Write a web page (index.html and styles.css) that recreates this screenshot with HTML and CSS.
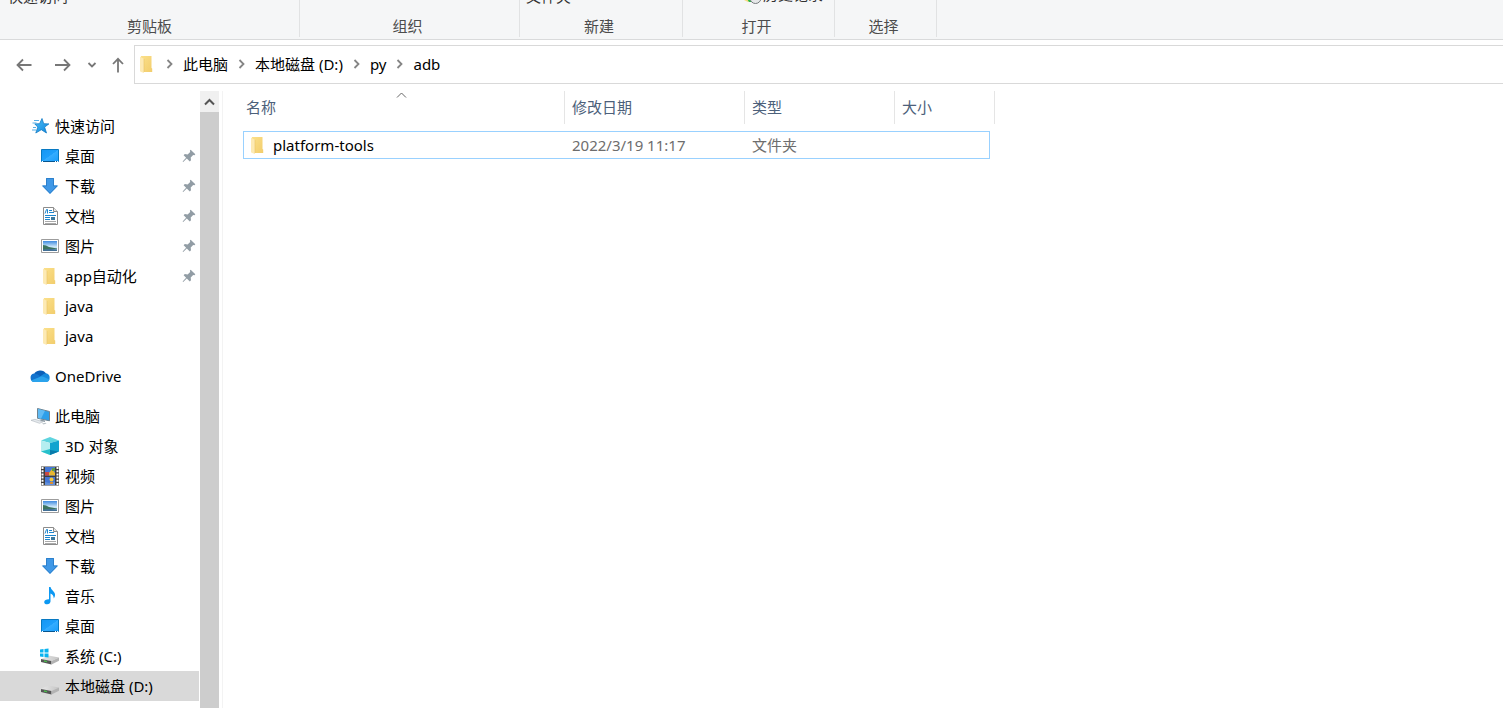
FILE: index.html
```html
<!DOCTYPE html>
<html lang="zh-CN">
<head>
<meta charset="utf-8">
<title>adb</title>
<link rel="stylesheet" href="styles.css">
</head>
<body>
<svg class="sprite" aria-hidden="true">
  <defs>
    <linearGradient id="g-folder" x1="0" y1="0" x2="1" y2="1"><stop offset="0" stop-color="#fbe08a"/><stop offset="1" stop-color="#f2cd6c"/></linearGradient>
    <linearGradient id="g-star" x1="0" y1="0" x2="1" y2="1"><stop offset="0" stop-color="#4fc0f7"/><stop offset="1" stop-color="#0c84dc"/></linearGradient>
    <linearGradient id="g-desk" x1="0" y1="0" x2="1" y2="1"><stop offset="0" stop-color="#1496f2"/><stop offset="0.5" stop-color="#1e9ffb"/><stop offset="0.52" stop-color="#35adff"/><stop offset="1" stop-color="#189cfb"/></linearGradient>
    <linearGradient id="g-sky" x1="0" y1="0" x2="0" y2="1"><stop offset="0" stop-color="#3f8be0"/><stop offset="0.6" stop-color="#d4ecfa"/><stop offset="1" stop-color="#6fa8cf"/></linearGradient>
    <linearGradient id="g-drive" x1="0" y1="0" x2="1" y2="0"><stop offset="0" stop-color="#e9e9e9"/><stop offset="1" stop-color="#c4c4c4"/></linearGradient>
  </defs>
  <symbol id="folder" viewBox="0 0 20 20">
    <path d="M4 2h10.500v12l.7.600V18H4z" fill="url(#g-folder)"/>
    <path d="M3 2.500l4 2.500v14l-3.500-1.200L3 17z" fill="#fdeab4"/>
    <path d="M7 5v13" stroke="#e9c265" stroke-width=".6"/>
  </symbol>
  <symbol id="star" viewBox="0 0 20 20">
    <path d="M12 2.500l1.700 5.200 5.200.2-4.300 3.200 1.900 5.900-5.200-3.300-5.500 3.300 2-5.900-3-3.200 4.800-.2z" fill="url(#g-star)" stroke="#147bc4" stroke-width=".8"/>
    <path d="M4 4.500h5M2.500 7h4M2 14h4M3 11.500h3" stroke="#56aee6" stroke-width="1"/>
  </symbol>
  <symbol id="desktop" viewBox="0 0 20 20">
    <path d="M1.500 3.500h17v12h-17z" fill="url(#g-desk)" stroke="#0879c2"/>
    <path d="M2 15.500h16" stroke="#05558f"/><path d="M2 15.500h1M15 15.500h1M17 15.500h1" stroke="#fff"/>
  </symbol>
  <symbol id="download" viewBox="0 0 20 20">
    <path d="M6 2h8v7.500h4.300L10 18 1.700 9.500H6z" fill="#3f98e7"/><path d="M6.500 2.500h7V10h3.600L10 17.300 2.900 10h3.600z" fill="none" stroke="#2d80cb"/>
  </symbol>
  <symbol id="document" viewBox="0 0 20 20">
    <path d="M3.500 1.500h10l4 4v13h-14z" fill="#fff" stroke="#8c8c8c"/>
    <path d="M13.500 1.500v4h4" fill="#e6e6e6" stroke="#8c8c8c"/>
    <path d="M5 7.500l1.500-4h1v4M9 4.500h3M9 6.500h5M5 9.500h11M5 11.500h5M5 13.500h5" fill="none" stroke="#1c86cf"/>
    <path d="M11 11h4v3h-4z" fill="#3d789c"/><path d="M5 15.500h11M5 17.500h11" stroke="#aaa"/>
  </symbol>
  <symbol id="picture" viewBox="0 0 20 20">
    <path d="M1.500 3.500h17v13h-17z" fill="#fff" stroke="#9c9c9c"/>
    <path d="M3 5h14v10H3z" fill="url(#g-sky)"/><path d="M3 9q3 0 6 2l8 1.500v.5L3 14z" fill="#3c7460"/><path d="M3 13.500q7-1 14 0V15H3z" fill="#416f96"/>
  </symbol>
  <symbol id="onedrive" viewBox="0 0 20 20">
    <path d="M4 8.500A6.500 5.500 0 0 1 16 7.500l-1 5.500H6z" fill="#0a5fb8"/>
    <path d="M4.500 16A4.300 4.300 0 0 1 4 7.500q3.500 0 6 2.500l3 6z" fill="#1173ce"/>
    <path d="M10 10.500l4-2.700q1.500-.8 3-.2A4.500 4.500 0 0 1 16.500 16H9z" fill="#1689dc"/>
    <path d="M1 14.500l10-4q2-.5 4 1l4.500 2a3.500 3.500 0 0 1-3 2.500H4.500q-2.500 0-3.500-1.500z" fill="#2ba3ec"/>
  </symbol>
  <symbol id="computer" viewBox="0 0 20 20">
    <path d="M7.500 2.500l12 3v9.300l-12-2.500z" fill="#2d9fea" stroke="#70838f"/><path d="M8 3l7 1.800-4 8L8 12z" fill="#61bbf4"/>
    <path d="M11 13.500l4 1v1.500l-5-1z" fill="#8d9aa3"/><path d="M1 14.300l4-1 8 2.500-3.500 1.500z" fill="#e5e9ed" stroke="#aeb7bd" stroke-width=".6"/><path d="M12 17.500l3.500-.8 1 .8-3 1z" fill="#bac2c8"/>
  </symbol>
  <symbol id="cube" viewBox="0 0 20 20">
    <path d="M10 1l9 3.500L10 7 1 4.500z" fill="#5ed4df"/><path d="M1 4.500L10 7v12l-9-3.500z" fill="#b5eef0"/><path d="M19 4.500L10 7v12l9-3.500z" fill="#12a4cf"/>
    <path d="M10 14l9 1.500L10 19z" fill="#087bab"/><path d="M1 15.500l9-2.500v6z" fill="#27c0cb"/>
  </symbol>
  <symbol id="video" viewBox="0 0 20 20">
    <path d="M1 0.500h18v19H1z" fill="#3e3e3e"/><path d="M2.500 1v18M17.500 1v18" stroke="#fff" stroke-width="2" stroke-dasharray="2 1.200"/>
    <path d="M5 1h10v8.500H5zM5 11h10v8H5z" fill="#4377d5"/>
    <path d="M9 7l3-4 3 4v2.500H9z" fill="#e8b72e"/><path d="M5 6h4v3.500H5z" fill="#ca4942"/><path d="M12 2h3v3h-3z" fill="#5c9a43"/><circle cx="11.500" cy="13.500" r="2" fill="#f2c83b"/><path d="M5 16l4 1 6-1v3H5z" fill="#628fd8"/><path d="M10 16h3v2h-3z" fill="#d98d35"/>
  </symbol>
  <symbol id="music" viewBox="0 0 20 20">
    <path d="M9 1h1.500q.5 2.500 3 4.500 3 3 .3 7-.2-4-3.300-5v8q-.3 2.500-3.300 2.800-3 0-3-2.300.3-2.700 4.800-2.700z" fill="#0c98f2"/>
  </symbol>
  <symbol id="drive" viewBox="0 0 20 20">
    <path d="M1 13l7.500-3.500 10.500 2-7.500 3.500z" fill="url(#g-drive)"/><path d="M1 13l10.500 2V18.500L1 16z" fill="#555"/><path d="M11.500 15l7.500-3.500v3.300l-7.500 3.700z" fill="#b3b3b3"/><path d="M4 15l3 .7" stroke="#4dbb4e" stroke-width="1.300"/>
  </symbol>
  <symbol id="sysdrive" viewBox="0 0 20 20">
    <use href="#drive" width="20" height="20"/><path d="M0 3.500l3.500-.5v3.500H0zM4.500 3L8.500 2.500v4h-4zM0 7.500h3.500V11L0 10.500zM4.500 7.500h4v4l-4-.5z" fill="#08b3f0"/>
  </symbol>
  <symbol id="pin" viewBox="0 0 14 14">
    <path d="M8.700 0.700l4.600 4.500-.8 1-1.300-.2-2.500 2.600.3 2.600-1.200 1.200-3-3L1.200 13 .6 12.600l3.500-3.800-2.500-2.500 1.200-1.200 2.800.3 2.600-2.500-.3-1.300z" fill="#929da5"/>
  </symbol>
  <symbol id="chevron" viewBox="0 0 7 10"><path d="M1.500 1l4 4-4 4" fill="none" stroke="#858585" stroke-width="1.800"/></symbol>
</svg>

<header class="ribbon">
  <section class="group group-clipboard"><div class="command">快速访问</div><h2 class="group-label">剪贴板</h2></section>
  <section class="group group-organize"><h2 class="group-label">组织</h2></section>
  <section class="group group-new"><div class="command">文件夹</div><h2 class="group-label">新建</h2></section>
  <section class="group group-open">
    <div class="command">
      <svg class="icon" viewBox="0 0 20 20" aria-hidden="true"><path d="M1 7h7v9l-3 2-4-2z" fill="#f8da7c"/><path d="M4 15l5-8v11H6z" fill="#2eb84b"/><circle cx="12.500" cy="14" r="5.500" fill="#e6e8e9" stroke="#777b7e"/><path d="M12.500 11v5" fill="none" stroke="#777"/></svg>历史记录
    </div>
    <h2 class="group-label">打开</h2>
  </section>
  <section class="group group-select"><h2 class="group-label">选择</h2></section>
</header>

<nav class="navbar" aria-label="导航">
  <div class="nav-buttons">
    <button class="nav-button" aria-label="后退"><svg width="16" height="14" viewBox="0 0 16 14"><path d="M15.500 7H1.500M7 1.500L1.500 7 7 12.500"/></svg></button>
    <button class="nav-button" aria-label="前进"><svg width="16" height="14" viewBox="0 0 16 14"><path d="M0 7h14.500M9 1.500L14.500 7 9 12.500"/></svg></button>
    <button class="nav-button" aria-label="最近浏览的位置"><svg width="10" height="8" viewBox="0 0 10 8"><path d="M1.500 2L5 5.500 8.500 2"/></svg></button>
    <button class="nav-button" aria-label="上移"><svg width="12" height="16" viewBox="0 0 12 16"><path d="M6 15.500V1.800M1 7l5-5.200L11 7"/></svg></button>
  </div>
  <div class="address">
    <svg width="18" height="20" viewBox="1 0 18 20" aria-hidden="true"><use href="#folder" width="20" height="20"/></svg>
    <svg class="chevron" aria-hidden="true"><use href="#chevron"/></svg>
    <a class="crumb" href="#">此电脑</a>
    <svg class="chevron" aria-hidden="true"><use href="#chevron"/></svg>
    <a class="crumb" href="#">本地磁盘 (D:)</a>
    <svg class="chevron" aria-hidden="true"><use href="#chevron"/></svg>
    <a class="crumb" href="#">py</a>
    <svg class="chevron" aria-hidden="true"><use href="#chevron"/></svg>
    <a class="crumb" href="#">adb</a>
  </div>
</nav>

<div class="workspace">
  <aside class="sidebar">
    <div class="tree">
      <div class="branch">
        <a class="node root" href="#"><svg class="icon"><use href="#star"/></svg>快速访问</a>
        <a class="node" href="#"><svg class="icon"><use href="#desktop"/></svg>桌面<svg class="pin"><use href="#pin"/></svg></a>
        <a class="node" href="#"><svg class="icon"><use href="#download"/></svg>下载<svg class="pin"><use href="#pin"/></svg></a>
        <a class="node" href="#"><svg class="icon"><use href="#document"/></svg>文档<svg class="pin"><use href="#pin"/></svg></a>
        <a class="node" href="#"><svg class="icon"><use href="#picture"/></svg>图片<svg class="pin"><use href="#pin"/></svg></a>
        <a class="node" href="#"><svg class="icon"><use href="#folder"/></svg>app自动化<svg class="pin"><use href="#pin"/></svg></a>
        <a class="node" href="#"><svg class="icon"><use href="#folder"/></svg>java</a>
        <a class="node" href="#"><svg class="icon"><use href="#folder"/></svg>java</a>
      </div>
      <div class="branch">
        <a class="node root" href="#"><svg class="icon"><use href="#onedrive"/></svg>OneDrive</a>
      </div>
      <div class="branch">
        <a class="node root" href="#"><svg class="icon"><use href="#computer"/></svg>此电脑</a>
        <a class="node" href="#"><svg class="icon"><use href="#cube"/></svg>3D 对象</a>
        <a class="node" href="#"><svg class="icon"><use href="#video"/></svg>视频</a>
        <a class="node" href="#"><svg class="icon"><use href="#picture"/></svg>图片</a>
        <a class="node" href="#"><svg class="icon"><use href="#document"/></svg>文档</a>
        <a class="node" href="#"><svg class="icon"><use href="#download"/></svg>下载</a>
        <a class="node" href="#"><svg class="icon"><use href="#music"/></svg>音乐</a>
        <a class="node" href="#"><svg class="icon"><use href="#desktop"/></svg>桌面</a>
        <a class="node" href="#"><svg class="icon"><use href="#sysdrive"/></svg>系统 (C:)</a>
        <a class="node selected" href="#" aria-current="true"><svg class="icon"><use href="#drive"/></svg>本地磁盘 (D:)</a>
      </div>
    </div>
    <div class="scrollbar">
      <button class="scroll-up" aria-label="向上滚动"><svg width="11" height="8" viewBox="0 0 11 8"><path d="M1 6.500l4.500-4.500L10 6.500" fill="none" stroke="#555" stroke-width="2"/></svg></button>
      <div class="thumb"></div>
    </div>
  </aside>
  <main class="files">
    <table class="file-table">
      <thead>
        <tr class="head-row">
          <th scope="col" aria-sort="ascending">名称<svg class="sort" viewBox="0 0 11 6"><path d="M1 5.500L5.500 1 10 5.500" fill="none" stroke="#666"/></svg></th>
          <th scope="col">修改日期</th><th scope="col">类型</th><th scope="col">大小</th>
        </tr>
      </thead>
      <tbody>
        <tr class="file-row">
          <td class="file-name"><svg class="icon"><use href="#folder"/></svg>platform-tools</td>
          <td>2022/3/19 11:17</td><td>文件夹</td><td></td>
        </tr>
      </tbody>
    </table>
  </main>
</div>
</body>
</html>
```

FILE: styles.css
```css
* { box-sizing: border-box; }

body {
  display: flex;
  flex-direction: column;
  height: 100vh;
  margin: 0;
  overflow: hidden;
  background: #fff;
  color: #000;
  font: 15px/20px "Noto Sans", "Noto Sans CJK SC", sans-serif;
}

a { color: inherit; text-decoration: none; }

button {
  display: flex;
  align-items: center;
  justify-content: center;
  padding: 0;
  border: 0;
  background: none;
}

.sprite { position: absolute; width: 0; height: 0; }
.icon { flex: none; width: 20px; height: 20px; }

/* Ribbon */
.ribbon {
  display: flex;
  flex: none;
  height: 40px;
  overflow: hidden;
  border-bottom: 1px solid #d9dadb;
  background: #f5f6f7;
}

.group {
  display: flex;
  flex-direction: column;
  justify-content: flex-end;
  height: 37px;
  border-right: 1px solid #e1e2e3;
}

.group-clipboard { width: 300px; }
.group-organize { width: 220px; }
.group-new { width: 163px; }
.group-open { width: 152px; }
.group-select { width: 102px; }

.group-label {
  margin: 0;
  padding: 0 4px 1px 0;
  color: #4c4c4c;
  font-size: 15px;
  font-weight: 400;
  text-align: center;
}

.group-clipboard .group-label { padding-right: 0; }

.command {
  display: flex;
  align-items: center;
  height: 20px;
  margin-bottom: 10px;
  padding: 0 8px;
  color: #333;
}

.group-new .command { padding: 0 6px; }
.group-open .command { margin-bottom: 12px; padding: 0 0 0 60px; }

/* Navigation bar */
.navbar { display: flex; flex: none; padding-top: 5px; }

.nav-buttons {
  display: flex;
  align-items: center;
  padding: 0 10px 0 16px;
}

.nav-button path { fill: none; stroke: #777; stroke-width: 1.8; }
.nav-button + .nav-button { margin-left: 23px; }
.nav-button:nth-child(3) { margin-left: 16px; }
.nav-button:nth-child(4) { margin-left: 15px; }

.address {
  display: flex;
  flex: 1;
  align-items: center;
  gap: 10px;
  height: 39px;
  padding: 0 0 2px 3px;
  border: 1px solid #d9d9d9;
  border-right: 0;
}

.chevron { width: 7px; height: 10px; }

/* Workspace */
.workspace { display: flex; flex: 1; min-height: 0; padding-top: 7px; }

.sidebar { display: flex; flex: none; width: 223px; border-right: 1px solid #f3f3f3; }

.tree {
  display: flex;
  flex: none;
  flex-direction: column;
  gap: 10px;
  width: 199px;
  padding-top: 20px;
}

.node {
  display: flex;
  align-items: center;
  gap: 5px;
  height: 30px;
  padding: 0 3px 0 40px;
}

.root { padding-left: 30px; }
.selected { background: #d9d9d9; }
.pin { width: 14px; height: 14px; margin-left: auto; }

.scrollbar {
  display: flex;
  flex-direction: column;
  width: 19px;
  margin-left: 1px;
}

.scroll-up { height: 21px; background: #f0f0f0; }
.thumb { flex: 1; background: #cdcdcd; }

/* File list */
.files { flex: 1; padding-left: 15px; }
.file-table { display: block; border-spacing: 0; }

.head-row, .file-row {
  display: grid;
  align-items: center;
}

.head-row {
  grid-template-columns: 327px 180px 150px 100px;
  width: 757px;
}

th {
  position: relative;
  height: 33px;
  padding: 6px 7px;
  border-right: 1px solid #e5e5e5;
  color: #4c607a;
  font-weight: 400;
  text-align: left;
}

th:first-child { padding-left: 8px; }

.sort {
  position: absolute;
  top: 1px;
  left: 50%;
  width: 11px;
  height: 6px;
  margin-left: -5px;
}

.file-row {
  grid-template-columns: 322px 180px 150px 1fr;
  width: 747px;
  height: 28px;
  margin: 7px 0 0 5px;
  outline: 1px solid #99d1ff;
  outline-offset: -1px;
}

td { padding: 0 7px; color: #6d6d6d; }

.file-name {
  display: flex;
  gap: 5px;
  padding-left: 5px;
  color: #000;
}
```
